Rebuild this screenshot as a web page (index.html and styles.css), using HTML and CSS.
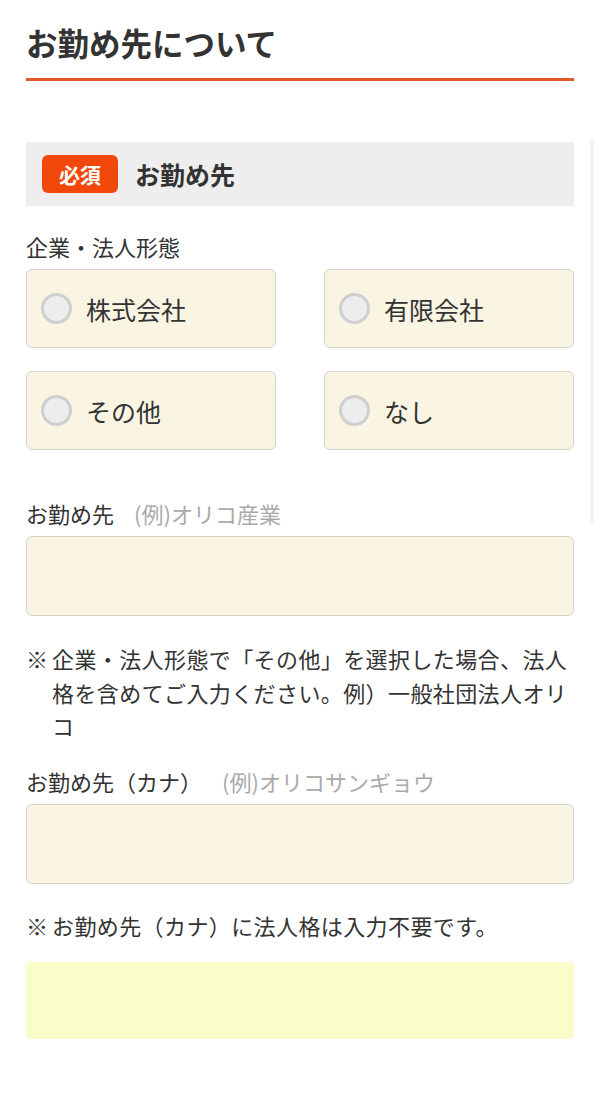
FILE: index.html
```html
<!DOCTYPE html>
<html lang="ja">
<head>
<meta charset="utf-8">
<title>お勤め先について</title>
<link rel="stylesheet" href="styles.css">
</head>
<body>
<div class="page">
  <h1 class="section-title">お勤め先について</h1>

  <div class="group-head">
    <span class="badge">必須</span>
    <span class="group-title">お勤め先</span>
  </div>

  <div class="field-label">企業・法人形態</div>
  <div class="radio-grid">
    <label class="radio-box"><span class="radio-dot"></span><span class="radio-text">株式会社</span></label>
    <label class="radio-box"><span class="radio-dot"></span><span class="radio-text">有限会社</span></label>
    <label class="radio-box"><span class="radio-dot"></span><span class="radio-text">その他</span></label>
    <label class="radio-box"><span class="radio-dot"></span><span class="radio-text">なし</span></label>
  </div>

  <div class="field-label label-gap">お勤め先<span class="example">(例)オリコ産業</span></div>
  <div class="input-box"></div>
  <div class="note"><span class="note-mark">※</span><span class="note-text">企業・法人形態で「その他」を選択した場合、法人格を含めてご入力ください。例）一般社団法人オリコ</span></div>

  <div class="field-label label-gap2">お勤め先（カナ）<span class="example">(例)オリコサンギョウ</span></div>
  <div class="input-box"></div>
  <div class="note note-single"><span class="note-mark">※</span><span class="note-text">お勤め先（カナ）に法人格は入力不要です。</span></div>

  <div class="yellow-box"></div>
</div>
<div class="scroll-track"></div>
</body>
</html>
```

FILE: styles.css
```css
* { box-sizing: border-box; }

html, body {
  margin: 0;
  padding: 0;
  background: #ffffff;
}

body {
  font-family: "Noto Sans CJK JP", "Noto Sans", sans-serif;
  color: #333333;
}

.page {
  padding: 0 26px;
}

.section-title {
  margin: 0;
  padding-top: 23px;
  padding-bottom: 17px;
  line-height: 38px;
  font-size: 31.5px;
  font-weight: 700;
  color: #333333;
  border-bottom: 3px solid #e2582a;
}

.group-head {
  margin-top: 61px;
  height: 64px;
  background: #eeeeee;
  display: flex;
  align-items: center;
  padding-left: 16px;
  gap: 17px;
}

.badge {
  display: inline-flex;
  align-items: center;
  justify-content: center;
  width: 76px;
  height: 38px;
  border-radius: 6px;
  background: #f2470a;
  color: #ffffff;
  font-size: 21px;
  font-weight: 700;
}

.group-title {
  font-size: 25px;
  font-weight: 700;
  color: #333333;
}

.field-label {
  margin-top: 25px;
  font-size: 22px;
  line-height: 30px;
  color: #333333;
}

.label-gap { margin-top: 48px; }
.label-gap2 { margin-top: 23px; }

.example {
  margin-left: 20px;
  color: #aaaaaa;
}

.radio-grid {
  margin-top: 8px;
  display: grid;
  grid-template-columns: 250px 250px;
  column-gap: 48px;
  row-gap: 23px;
}

.radio-box {
  height: 79px;
  background: #faf5e3;
  border: 1.5px solid #d6d4cc;
  border-radius: 6px;
  display: flex;
  align-items: center;
  padding-left: 14px;
  gap: 14px;
}

.radio-dot {
  width: 31px;
  height: 31px;
  border-radius: 50%;
  background: #ededed;
  border: 3px solid #cfcfcf;
  flex: none;
}

.radio-text {
  font-size: 25px;
  color: #333333;
}

.input-box {
  margin-top: 8px;
  height: 80px;
  background: #faf5e3;
  border: 1.5px solid #d3d1ca;
  border-radius: 6px;
}

.note {
  margin-top: 26px;
  display: flex;
  font-size: 22px;
  line-height: 33.5px;
  letter-spacing: 0.4px;
  color: #333333;
}

.note-single { margin-top: 25px; }

.note-mark {
  width: 26px;
  flex: none;
  letter-spacing: 0;
}

.note-text {
  flex: 1;
}

.yellow-box {
  margin-top: 20px;
  height: 77px;
  background: #fafdca;
  border-radius: 4px;
}

.scroll-track {
  position: fixed;
  top: 138px;
  right: 6px;
  width: 4px;
  height: 385px;
  background: #f4f4f4;
  border-radius: 2px;
}
```
